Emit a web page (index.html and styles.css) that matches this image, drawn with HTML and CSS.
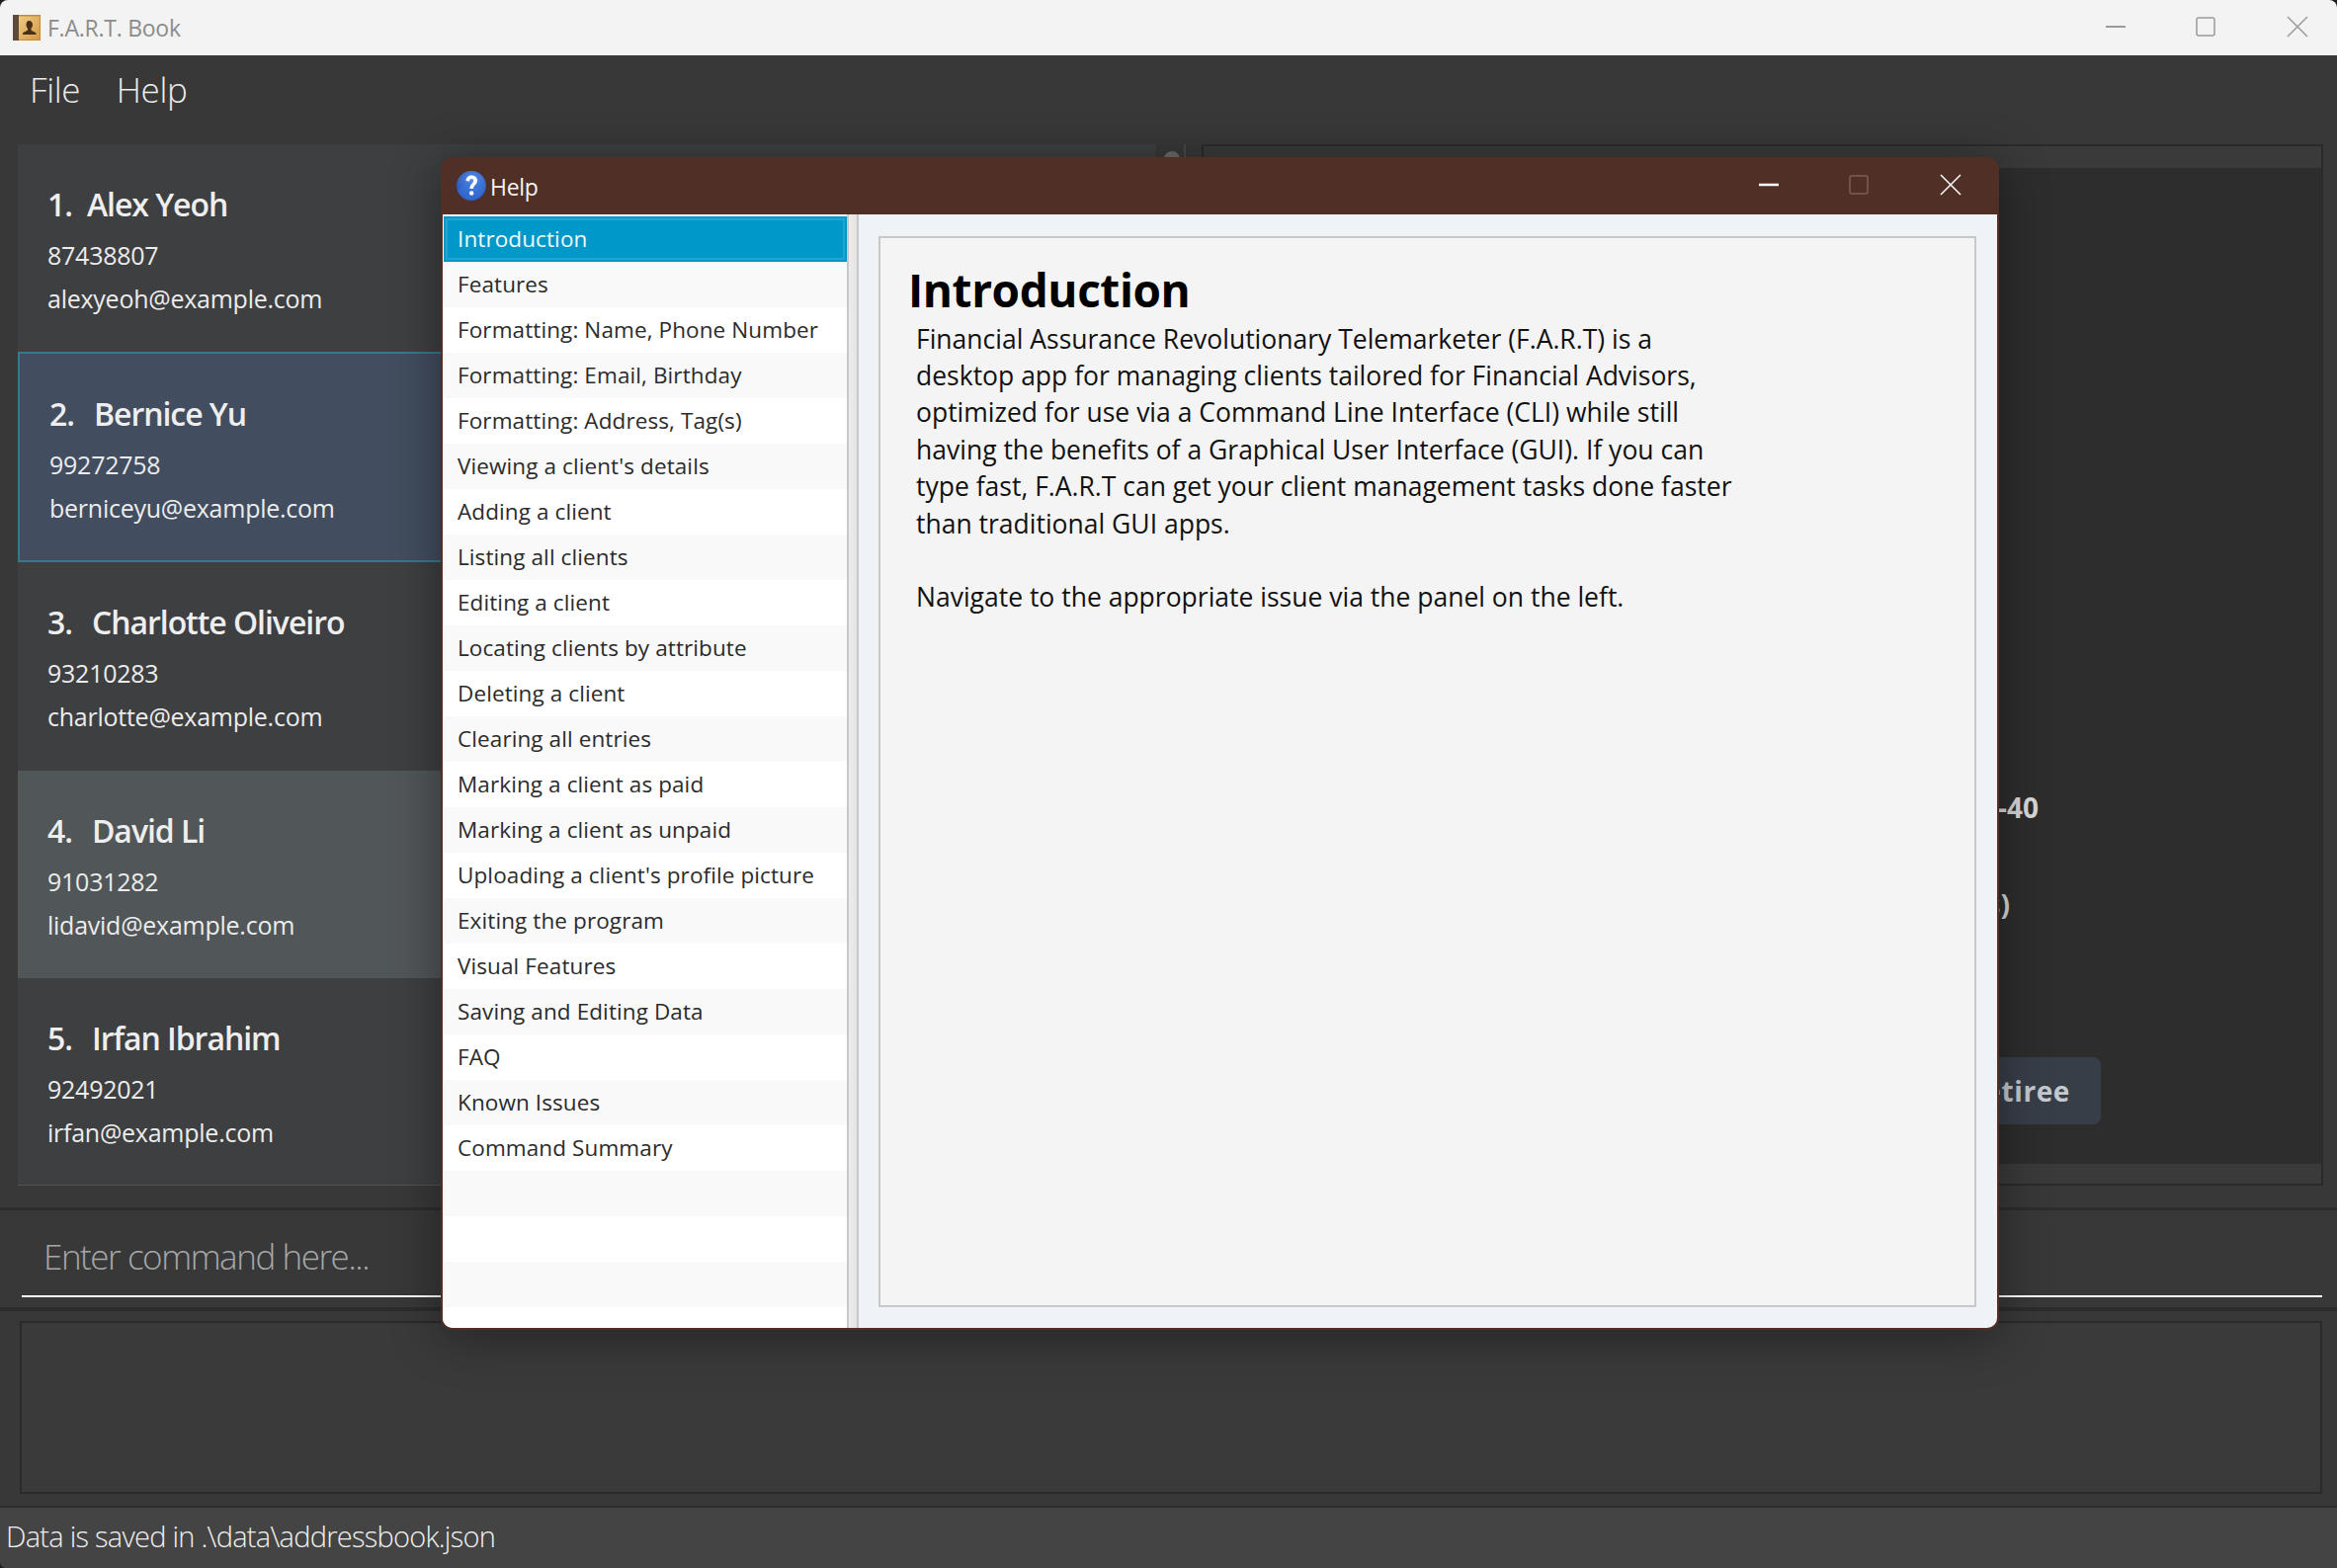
FILE: index.html
```html
<!DOCTYPE html>
<html lang="en">
<head>
<meta charset="utf-8">
<title>F.A.R.T. Book</title>
<link rel="stylesheet" href="styles.css">
</head>
<body>
<div class="window">
  <header class="titlebar">
    <svg class="app-icon" viewBox="0 0 28 27" aria-hidden="true">
      <defs><linearGradient id="bookg" x1="0" y1="0" x2="1" y2="1"><stop offset="0" stop-color="#eecb83"/><stop offset="1" stop-color="#d49a45"/></linearGradient></defs>
      <rect x="0" y="0" width="28" height="26" fill="#c48a2c"/>
      <rect x="0" y="0" width="6" height="26" fill="#5d4a3c"/>
      <rect x="6" y="1.5" width="21" height="23.5" fill="url(#bookg)"/>
      <path d="M16.5 6c2.2 0 3.5 1.8 3.5 4 0 1.700-.7 3-1.500 3.800v1.400c0 1 3.500 1.700 5 3.300v1.500H10v-1.500c1.500-1.600 5-2.300 5-3.300v-1.400c-.8-.8-1.500-2.100-1.500-3.800 0-2.200 .8-4 3-4z" fill="#4a3018"/>
    </svg>
    <span class="app-title">F.A.R.T. Book</span>
    <div class="winctl winctl-main">
      <svg viewBox="0 0 20 20"><path class="dash" d="M0 10H20"/></svg>
      <svg viewBox="0 0 20 20"><rect x="1" y="1" width="18" height="18" rx="2"/></svg>
      <svg viewBox="0 0 20 20"><path d="M0 0L20 20M20 0L0 20"/></svg>
    </div>
  </header>

  <nav class="menubar"><span>File</span><span>Help</span></nav>

  <main class="content">
    <section class="list-pane">
      <div class="cards">
        <article class="card"><h2><span class="num num-one">1.</span>Alex Yeoh</h2><p>87438807</p><p>alexyeoh@example.com</p></article>
        <article class="card selected"><h2><span class="num">2.</span>Bernice Yu</h2><p>99272758</p><p>berniceyu@example.com</p></article>
        <article class="card"><h2><span class="num">3.</span>Charlotte Oliveiro</h2><p>93210283</p><p>charlotte@example.com</p></article>
        <article class="card hover"><h2><span class="num">4.</span>David Li</h2><p>91031282</p><p>lidavid@example.com</p></article>
        <article class="card"><h2><span class="num">5.</span>Irfan Ibrahim</h2><p>92492021</p><p>irfan@example.com</p></article>
      </div>
      <div class="scrolltrack"><div class="thumb"></div></div>
    </section>
    <section class="detail-pane">
      <div class="detail-inner">
        <p class="fact fact-age">31-40</p>
        <p class="fact fact-kids">Kids)</p>
        <span class="badge">Retiree</span>
      </div>
    </section>
  </main>

  <section class="command"><div class="command-input">Enter command here...</div></section>
  <section class="result"><div class="result-box"></div></section>
  <footer class="status">Data is saved in .\data\addressbook.json</footer>
</div>

<div class="dialog">
  <header class="dialog-title">
    <svg class="help-icon" viewBox="0 0 30 30" aria-hidden="true">
      <defs>
        <radialGradient id="helpg" cx=".55" cy=".3" r=".8"><stop offset="0" stop-color="#5a8fe8"/><stop offset="1" stop-color="#1a47b0"/></radialGradient>
      </defs>
      <circle cx="15" cy="15" r="15" fill="url(#helpg)"/>
      <path d="M1 19C8 12 18 10 29 12C29 22 23 30 15 30C8 30 3 25 1 19Z" fill="#3b74d8" opacity=".55"/>
      <path d="M9.500 10C9.500 6.500 12.300 4.500 15.300 4.500C18.500 4.500 21 6.700 21 9.700C21 13.700 17 14.200 17 18H13.400C13.400 13 17.300 12.400 17.300 10C17.300 8.800 16.500 8 15.200 8C13.900 8 13.100 8.900 13.100 10.500Z" fill="#fff"/>
      <circle cx="15.200" cy="22.500" r="2.200" fill="#fff"/>
    </svg>
    <span class="dialog-name">Help</span>
    <div class="winctl winctl-dialog">
      <svg viewBox="0 0 20 20"><path class="dash" d="M0 10H20"/></svg>
      <svg class="off" viewBox="0 0 20 20"><rect x="1" y="1" width="18" height="18" rx="2"/></svg>
      <svg viewBox="0 0 20 20"><path d="M0 0L20 20M20 0L0 20"/></svg>
    </div>
  </header>
  <div class="dialog-body">
    <ul class="topics">
      <li class="active">Introduction</li>
      <li>Features</li>
      <li>Formatting: Name, Phone Number</li>
      <li>Formatting: Email, Birthday</li>
      <li>Formatting: Address, Tag(s)</li>
      <li>Viewing a client's details</li>
      <li>Adding a client</li>
      <li>Listing all clients</li>
      <li>Editing a client</li>
      <li>Locating clients by attribute</li>
      <li>Deleting a client</li>
      <li>Clearing all entries</li>
      <li>Marking a client as paid</li>
      <li>Marking a client as unpaid</li>
      <li>Uploading a client's profile picture</li>
      <li>Exiting the program</li>
      <li>Visual Features</li>
      <li>Saving and Editing Data</li>
      <li>FAQ</li>
      <li>Known Issues</li>
      <li>Command Summary</li>
      <li></li>
      <li></li>
      <li></li>
    </ul>
    <div class="divider"></div>
    <div class="reader">
      <article class="doc">
        <h1>Introduction</h1>
        <p>Financial Assurance Revolutionary Telemarketer (F.A.R.T) is a<br>desktop app for managing clients tailored for Financial Advisors,<br>optimized for use via a Command Line Interface (CLI) while still<br>having the benefits of a Graphical User Interface (GUI). If you can<br>type fast, F.A.R.T can get your client management tasks done faster<br>than traditional GUI apps.</p>
        <p>Navigate to the appropriate issue via the panel on the left.</p>
      </article>
    </div>
  </div>
</div>
</body>
</html>
```

FILE: styles.css
```css
* { box-sizing: border-box; }
html, body { margin: 0; height: 100%; }
body { background: #1c1c1c; overflow: hidden; font-family: "Open Sans", "Noto Sans", sans-serif; }
p, h1, h2, ul { margin: 0; padding: 0; }

.window { position: relative; display: flex; flex-direction: column; height: 1587px; background: #383838; border-radius: 8px 8px 0 6px; overflow: hidden; }

.titlebar { flex: none; height: 56px; display: flex; align-items: center; padding-left: 13px; background: #f3f3f3; }
.app-icon { width: 28px; height: 27px; margin-right: 7px; }
.app-title { font-size: 23px; color: #8b8b8b; letter-spacing: -.25px; }

.winctl { display: flex; margin-left: auto; }
.winctl svg { display: block; width: 20px; height: 20px; fill: none; stroke-width: 1.500; overflow: visible; }
.winctl svg:last-child { margin-left: 2px; }
.winctl .dash { stroke-width: 2; }
.winctl-main { gap: 71px; padding-right: 30px; margin-top: -2px; }
.winctl-main svg { stroke: #9a9a9a; }
.winctl-dialog { gap: 71px; padding-right: 37px; margin-top: -2px; }
.winctl-dialog svg { stroke: #fff; }
.winctl-dialog svg.off { stroke: #7b6058; }
.winctl-dialog .dash { stroke-width: 2.500; }

.menubar { flex: none; height: 90px; display: flex; gap: 36.500px; padding: 9px 0 0 30px; font-size: 35px; font-weight: 300; line-height: 52px; color: #ececec; letter-spacing: -.35px; }

.content { flex: none; height: 1076px; display: flex; }
.list-pane { flex: none; width: 1214px; padding-left: 18px; display: flex; }
.cards { width: 1152px; align-self: flex-start; background: #3e3f40; }
.card { height: 210px; padding: 0 0 0 30px; color: #ececec; }
.card:nth-child(3) { height: 211px; }
.card:last-child { border-bottom: 1px solid #4f5557; }
.card h2 { padding-top: 39px; font-size: 32px; line-height: 44px; font-weight: 600; letter-spacing: -1.050px; color: #eee; }
.card .num { margin-right: 20px; }
.card .num-one { margin-right: 15px; }
.card p { font-size: 25px; line-height: 44px; letter-spacing: -.25px; }
.card h2 + p { margin-top: 7px; }
.card.selected { height: 213px; background: #424d5f; border: 2px solid #38788f; }
.card.hover { background: #515658; }
.scrolltrack { width: 30px; height: 14px; padding: 7px 0 0 8px; border-right: 2px solid #4a4a4a; }
.thumb { width: 16px; height: 16px; border-radius: 8px 8px 0 0; background: #6a6a6a; }

.detail-pane { flex: none; width: 1135px; margin: 0 0 22px 2px; border: 2px solid #2a2a2a; background: #3a3a3a; }
.detail-inner { height: 1008px; margin-top: 22px; background: #2d2d2d; padding-top: 627px; }
.fact { height: 98px; font-weight: 700; font-size: 28px; line-height: 40px; color: #d8d8d8; text-align: right; }
.fact-age { width: 845px; }
.fact-kids { width: 816px; }
.badge { display: block; width: 230px; height: 68px; margin: 77px 0 0 678px; padding: 14px 31px 0 0; border-radius: 8px; background: #383e48; font-weight: 700; font-size: 28px; line-height: 40px; color: #c5c9cf; text-align: right; letter-spacing: .6px; }

.command { flex: none; height: 101px; border-top: 3px solid #2c2c2c; padding: 0 15px 0 22px; }
.command-input { height: 88px; padding: 22px 0 0 22px; border-bottom: 2px solid #fff; font-size: 35px; font-weight: 300; line-height: 50px; color: #a6a8a8; letter-spacing: -1.450px; }

.result { flex: none; height: 201px; border-top: 4px solid #2c2c2c; padding: 10px 15px 12px 20px; }
.result-box { height: 175px; border: 2px solid #2a2a2a; background: #3a3a3a; }

.status { flex: 1; border-top: 2px solid #2c2c2c; padding: 7px 0 0 6px; background: #444; font-size: 29px; font-weight: 300; line-height: 44px; color: #f0f0f0; letter-spacing: -.75px; }

/* Help dialog floats above the main window */
.dialog { position: absolute; left: 446px; top: 159px; width: 1577px; height: 1187px; display: flex; flex-direction: column; background: #502f26; border-radius: 12px; box-shadow: 0 6px 50px rgba(0,0,0,.4); overflow: hidden; padding: 0 2px 2px 2px; }
.dialog-title { flex: none; height: 58px; display: flex; align-items: center; padding-left: 14px; }
.help-icon { width: 30px; height: 30px; margin-right: 4px; }
.dialog-name { font-size: 23px; color: #f4f4f4; letter-spacing: -.3px; position: relative; top: 1px; }

.dialog-body { flex: 1; display: flex; min-height: 0; background: #eff3f8; border-radius: 0 0 10px 10px; overflow: hidden; }
.topics { flex: none; width: 409px; list-style: none; padding: 2px 0 0 1px; background: #fff; overflow: hidden; }
.topics li { height: 46px; padding-left: 14px; font-size: 22.500px; line-height: 46px; color: #2b2b2b; letter-spacing: .1px; }
.topics li:nth-child(even) { background: #f9f9f9; }
.topics li.active { background: #0097c9; color: #f4f9fb; box-shadow: inset 0 0 0 2px #0097c9, inset 0 0 0 4px #22a5d2; }
.divider { flex: none; width: 12px; background: linear-gradient(90deg, #c8c8c8 0 2px, #ececec 2px, #e4e4e4 10px, #c8c8c8 10px); }
.reader { flex: 1; padding: 22px 21px 21px 20px; }
.doc { height: 100%; border: 2px solid #c8c8c8; background: #f4f4f4; padding: 19px 0 0 28px; color: #111; }
.doc h1 { height: 64.500px; font-size: 46px; font-weight: 700; line-height: 66px; color: #000; letter-spacing: -.43px; }
.doc p { margin: 0 0 37.400px 8px; font-size: 26.500px; line-height: 37.400px; }
```
